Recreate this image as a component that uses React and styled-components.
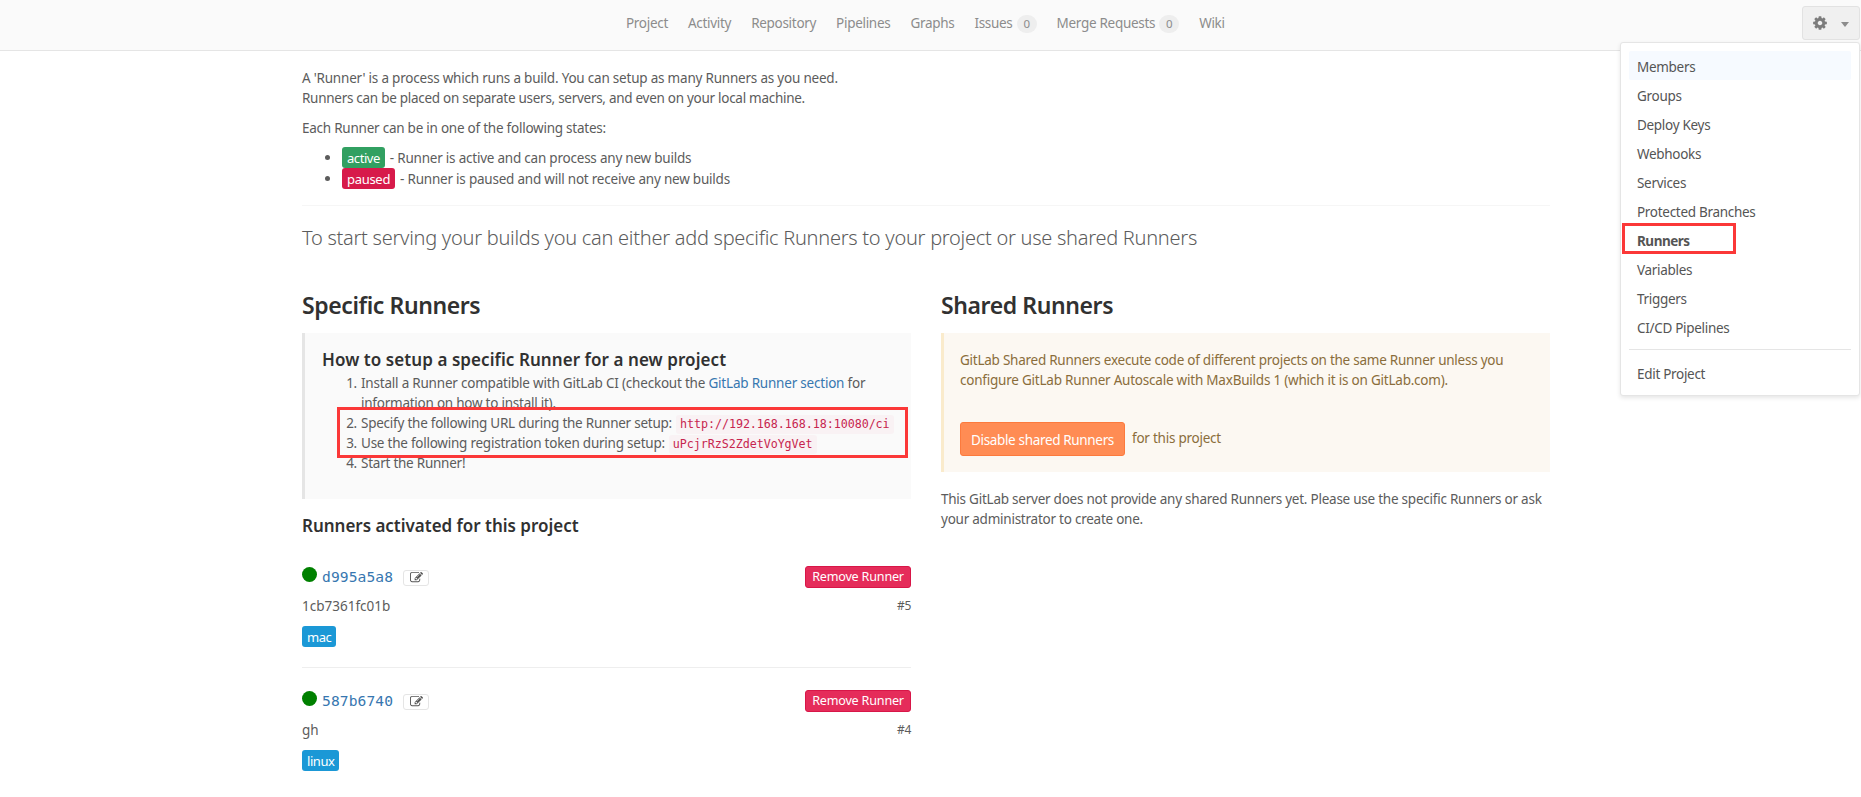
import React from 'react';
import styled, { createGlobalStyle } from 'styled-components';

const Global = createGlobalStyle`
  * { box-sizing: border-box; }
  html, body { margin: 0; background: #fff; overflow: hidden; }
  body {
    font: 13.5px/20px "Noto Sans", "Open Sans", sans-serif;
    color: #5c5c5c;
    letter-spacing: -0.24px;
  }
  h2, h3, h4, p, ul, ol { margin: 0; padding: 0; list-style: none; }
  a { text-decoration: none; color: #3777b0; }
  button { font: inherit; letter-spacing: inherit; margin: 0; }
`;

const Header = styled.header`
  display: flex;
  height: 51px;
  background: #fafafa;
  border-bottom: 1px solid #e5e5e5;
`;
const Nav = styled.nav`
  display: flex;
  gap: 20px;
  padding: 13px 0 0 626px;
  letter-spacing: -0.3px;
`;
const NavLink = styled.a`
  display: flex;
  color: #8c8c8c;
  white-space: nowrap;
`;
const Count = styled.span`
  width: 20px;
  height: 18px;
  margin: 2px 0 0 4px;
  border-radius: 9px;
  background: #eee;
  font-size: 11.5px;
  line-height: 18px;
  text-align: center;
`;
const Settings = styled.div`
  position: relative;
  margin: 6px 1px 0 auto;
`;
const GearButton = styled.button`
  display: flex;
  align-items: center;
  justify-content: space-between;
  width: 58px;
  height: 34px;
  padding: 0 10px 0 9px;
  border: 1px solid #e2e2e2;
  border-radius: 3px;
  background: #f0f0f0;
  color: #7c7c7c;
`;
const Caret = styled.span`
  margin-top: 2px;
  border: 4px solid transparent;
  border-top: 5px solid #8c8c8c;
  border-bottom: 0;
`;
const Menu = styled.div`
  position: absolute;
  z-index: 2;
  top: 36px;
  right: 0;
  width: 240px;
  padding: 8px;
  border: 1px solid #e5e5e5;
  border-radius: 3px;
  background: #fff;
  box-shadow: 0 2px 4px rgba(0, 0, 0, 0.1);
`;
const MenuItem = styled.a`
  display: block;
  padding: 6px 8px 3px;
  border-radius: 2px;
  color: #555;
  background: ${(p) => (p.$hover ? '#f6faff' : 'transparent')};
  font-weight: ${(p) => (p.$active ? 700 : 400)};
  letter-spacing: ${(p) => (p.$active ? '-0.5px' : '-0.3px')};
`;
const Divider = styled.div`
  height: 1px;
  margin: 8px 0;
  background: #e5e5e5;
`;
const Marker = styled.div`
  position: absolute;
  z-index: 3;
  left: ${(p) => p.$left}px;
  top: ${(p) => p.$top}px;
  width: ${(p) => p.$w}px;
  height: ${(p) => p.$h}px;
  border: 3px solid #fb3838;
  pointer-events: none;
`;

const Main = styled.main`
  width: 1248px;
  margin-left: 302px;
  padding-top: 17px;
`;
const Line = styled.span`
  display: block;
  height: 20px;
  white-space: nowrap;
  letter-spacing: ${(p) => p.$ls ?? -0.24}px;
`;
const Paragraph = styled.p`
  margin-bottom: 10px;
`;
const States = styled.ul`
  margin-top: -1px;
  padding-left: 23px;
`;
const State = styled.li`
  display: flex;
  align-items: center;
  height: 21px;
  letter-spacing: -0.22px;
`;
const Bullet = styled.i`
  width: 5px;
  height: 5px;
  margin: 0 12px 0 0;
  border-radius: 50%;
  background: #5c5c5c;
`;
const Label = styled.span`
  display: inline-block;
  height: 21px;
  margin-right: 5px;
  padding: 1px 5px 0;
  border-radius: 3px;
  background: ${(p) => p.$bg};
  color: #fff;
  font-size: 13px;
  letter-spacing: ${(p) => p.$ls ?? -0.45}px;
`;
const Rule = styled.div`
  height: 1px;
  margin-top: 16px;
  background: #f6f6f6;
`;
const Lead = styled.h4`
  margin-top: 18px;
  font-size: 20px;
  font-weight: 300;
  line-height: 28px;
  letter-spacing: -0.27px;
  white-space: nowrap;
`;
const Columns = styled.div`
  display: grid;
  grid-template-columns: 609px 609px;
  gap: 30px;
  margin-top: 37px;
`;
const Title = styled.h2`
  margin-bottom: 12px;
  color: #313131;
  font-size: 23px;
  font-weight: 600;
  line-height: 32px;
  letter-spacing: -0.4px;
`;
const Subtitle = styled.h3`
  color: #313131;
  font-size: 17px;
  font-weight: 600;
  line-height: 24px;
  letter-spacing: ${(p) => p.$ls}px;
  white-space: nowrap;
`;
const SetupBox = styled.div`
  position: relative;
  height: 166px;
  margin-bottom: 15px;
  padding: 15px 0 0 17px;
  border-left: 3px solid #e5e5e5;
  background: #fafafa;
`;
const Steps = styled.ol`
  padding-top: 1px;
`;
const Step = styled.li`
  display: grid;
  grid-template-columns: 35px auto;
  column-gap: 4px;
  justify-content: start;
`;
const StepNumber = styled.span`
  text-align: right;
`;
const Code = styled.code`
  display: inline-block;
  height: 19px;
  margin-left: 4px;
  padding: 0 4px;
  border-radius: 3px;
  background: #f9f2f4;
  color: #c7254e;
  font: 11.7px/19px "DejaVu Sans Mono", monospace;
  letter-spacing: -0.05px;
`;
const RunnerList = styled.div`
  margin-top: 6px;
`;
const Runner = styled.section`
  height: 124px;
  padding-top: 21.5px;
  border-bottom: ${(p) => (p.$last ? '0' : '1px solid #eee')};
`;
const RunnerHead = styled.div`
  display: flex;
  height: 22px;
`;
const Dot = styled.i`
  width: 15px;
  height: 15px;
  margin: 1px 5px 0 0;
  border-radius: 50%;
  background: #008000;
`;
const RunnerId = styled.a`
  width: 71px;
  font: 14.6px/21px "DejaVu Sans Mono", monospace;
  letter-spacing: 0.1px;
`;
const EditButton = styled.button`
  display: flex;
  align-items: center;
  justify-content: center;
  width: 26px;
  height: 16px;
  margin: 4px 0 0 10px;
  padding: 0;
  border: 1px solid #e5e5e5;
  border-radius: 3px;
  background: #fff;
  color: #555;
`;
const RemoveButton = styled.button`
  width: 106px;
  height: 22px;
  margin-left: auto;
  padding: 1px 0 0;
  border: 1px solid #d81648;
  border-radius: 3px;
  background: #e52c5a;
  color: #fff;
  font-size: 12.6px;
  line-height: 18px;
  letter-spacing: -0.2px;
`;
const RunnerInfo = styled.div`
  display: flex;
  justify-content: space-between;
  margin-top: 8px;
  letter-spacing: 0;
`;
const RunnerNumber = styled.small`
  font-size: 12px;
  letter-spacing: -0.3px;
`;
const Tag = styled(Label)`
  display: block;
  width: fit-content;
  margin-top: 10px;
`;
const SharedBox = styled.div`
  height: 139px;
  margin-bottom: 17px;
  padding: 17px 0 0 16px;
  border-left: 3px solid #faebcc;
  background: #fcf8f2;
  color: #8a6d3b;
`;
const Actions = styled.div`
  display: flex;
  gap: 7px;
  margin-top: 32px;
  line-height: 32px;
`;
const DisableButton = styled.button`
  width: 165px;
  height: 34px;
  padding: 1px 0 0;
  border: 1px solid #fc7a3d;
  border-radius: 3px;
  background: #ff8c54;
  color: #fff;
  letter-spacing: -0.34px;
`;

const GearIcon = () => (
  <svg width="16" height="16" viewBox="0 0 1792 1792" fill="currentColor">
    <path d="M1152 896q0-106-75-181t-181-75-181 75-75 181 75 181 181 75 181-75 75-181zm512-109v222q0 12-8 23t-20 13l-185 28q-19 54-39 91 35 50 107 138 10 12 10 25t-9 23q-27 37-99 108t-94 71q-12 0-26-9l-138-108q-44 23-91 38-16 136-29 186-7 28-36 28h-222q-14 0-24.5-8.5t-11.5-21.5l-28-184q-49-16-90-37l-141 107q-10 9-25 9-14 0-25-11-126-114-165-168-7-10-7-23 0-12 8-23 15-21 51-66.5t54-70.5q-27-50-41-99l-183-27q-13-2-21-12.5t-8-23.5v-222q0-12 8-23t19-13l186-28q14-46 39-92-40-57-107-138-10-12-10-24 0-10 9-23 26-36 98.5-107.5t94.5-71.5q13 0 26 10l138 107q44-23 91-38 16-136 29-186 7-28 36-28h222q14 0 24.5 8.5t11.5 21.5l28 184q49 16 90 37l142-107q9-9 24-9 13 0 25 10 129 119 165 170 7 8 7 22 0 12-8 23-15 21-51 66.5t-54 70.5q26 50 41 98l183 28q13 2 21 12.5t8 23.5z" />
  </svg>
);
const EditIcon = () => (
  <svg width="13" height="13" viewBox="0 0 1792 1792" fill="currentColor">
    <path d="M888 1184l116-116-152-152-116 116v56h96v96h56zm440-720q-16-16-33 1l-350 350q-17 17-1 33t33-1l350-350q17-17 1-33zm80 594v190q0 119-84.5 203.5t-203.5 84.5h-832q-119 0-203.5-84.5t-84.5-203.5v-832q0-119 84.5-203.5t203.5-84.5h832q63 0 117 25 15 7 18 23 3 17-9 29l-49 49q-14 14-32 8-23-6-45-6h-832q-66 0-113 47t-47 113v832q0 66 47 113t113 47h832q66 0 113-47t47-113v-126q0-13 9-22l64-64q15-15 35-7t20 29zm-96-738l288 288-672 672h-288v-288zm444 132l-92 92-288-288 92-92q28-28 68-28t68 28l152 152q28 28 28 68t-28 68z" />
  </svg>
);

const navItems = [
  ['Project'], ['Activity'], ['Repository'], ['Pipelines'], ['Graphs'],
  ['Issues', 0], ['Merge Requests', 0], ['Wiki'],
];
const menuItems = [
  'Members', 'Groups', 'Deploy Keys', 'Webhooks', 'Services',
  'Protected Branches', 'Runners', 'Variables', 'Triggers', 'CI/CD Pipelines',
];
const runners = [
  { id: 'd995a5a8', name: '1cb7361fc01b', number: 5, tag: 'mac' },
  { id: '587b6740', name: 'gh', number: 4, tag: 'linux' },
];

export default function App() {
  return (
    <>
      <Global />
      <Header>
        <Nav>
          {navItems.map(([name, count]) => (
            <NavLink key={name}>
              {name}
              {count !== undefined && <Count>{count}</Count>}
            </NavLink>
          ))}
        </Nav>
        <Settings>
          <GearButton aria-label="Settings"><GearIcon /><Caret /></GearButton>
          <Menu>
            {menuItems.map((name) => (
              <MenuItem key={name} $hover={name === 'Members'} $active={name === 'Runners'}>{name}</MenuItem>
            ))}
            <Divider />
            <MenuItem>Edit Project</MenuItem>
            <Marker $left={1} $top={180} $w={114} $h={31} />
          </Menu>
        </Settings>
      </Header>
      <Main>
        <Paragraph>
          <Line $ls={-0.21}>A 'Runner' is a process which runs a build. You can setup as many Runners as you need.</Line>
          <Line $ls={-0.28}>Runners can be placed on separate users, servers, and even on your local machine.</Line>
        </Paragraph>
        <Paragraph><Line>Each Runner can be in one of the following states:</Line></Paragraph>
        <States>
          <State><Bullet /><Label $bg="#31a061">active</Label>- Runner is active and can process any new builds</State>
          <State><Bullet /><Label $bg="#d71a4a" $ls={-0.3}>paused</Label>- Runner is paused and will not receive any new builds</State>
        </States>
        <Rule />
        <Lead>To start serving your builds you can either add specific Runners to your project or use shared Runners</Lead>
        <Columns>
          <div>
            <Title>Specific Runners</Title>
            <SetupBox>
              <Subtitle $ls={0.07}>How to setup a specific Runner for a new project</Subtitle>
              <Steps>
                <Step>
                  <StepNumber>1.</StepNumber>
                  <div>
                    <Line $ls={-0.21}>Install a Runner compatible with GitLab CI (checkout the <a>GitLab Runner section</a> for</Line>
                    <Line>information on how to install it).</Line>
                  </div>
                </Step>
                <Step><StepNumber>2.</StepNumber><Line>Specify the following URL during the Runner setup:<Code>http://192.168.168.18:10080/ci</Code></Line></Step>
                <Step><StepNumber>3.</StepNumber><Line>Use the following registration token during setup:<Code>uPcjrRzS2ZdetVoYgVet</Code></Line></Step>
                <Step><StepNumber>4.</StepNumber><Line>Start the Runner!</Line></Step>
              </Steps>
              <Marker $left={32} $top={74} $w={571} $h={51} />
            </SetupBox>
            <Subtitle $ls={-0.02}>Runners activated for this project</Subtitle>
            <RunnerList>
              {runners.map((r, i) => (
                <Runner key={r.id} $last={i === runners.length - 1}>
                  <RunnerHead>
                    <Dot />
                    <RunnerId>{r.id}</RunnerId>
                    <EditButton aria-label="Edit"><EditIcon /></EditButton>
                    <RemoveButton>Remove Runner</RemoveButton>
                  </RunnerHead>
                  <RunnerInfo>{r.name}<RunnerNumber>#{r.number}</RunnerNumber></RunnerInfo>
                  <Tag $bg="#1b98d6">{r.tag}</Tag>
                </Runner>
              ))}
            </RunnerList>
          </div>
          <div>
            <Title>Shared Runners</Title>
            <SharedBox>
              <Line $ls={-0.25}>GitLab Shared Runners execute code of different projects on the same Runner unless you</Line>
              <Line $ls={-0.22}>configure GitLab Runner Autoscale with MaxBuilds 1 (which it is on GitLab.com).</Line>
              <Actions><DisableButton>Disable shared Runners</DisableButton>for this project</Actions>
            </SharedBox>
            <Line $ls={-0.24}>This GitLab server does not provide any shared Runners yet. Please use the specific Runners or ask</Line>
            <Line>your administrator to create one.</Line>
          </div>
        </Columns>
      </Main>
    </>
  );
}
